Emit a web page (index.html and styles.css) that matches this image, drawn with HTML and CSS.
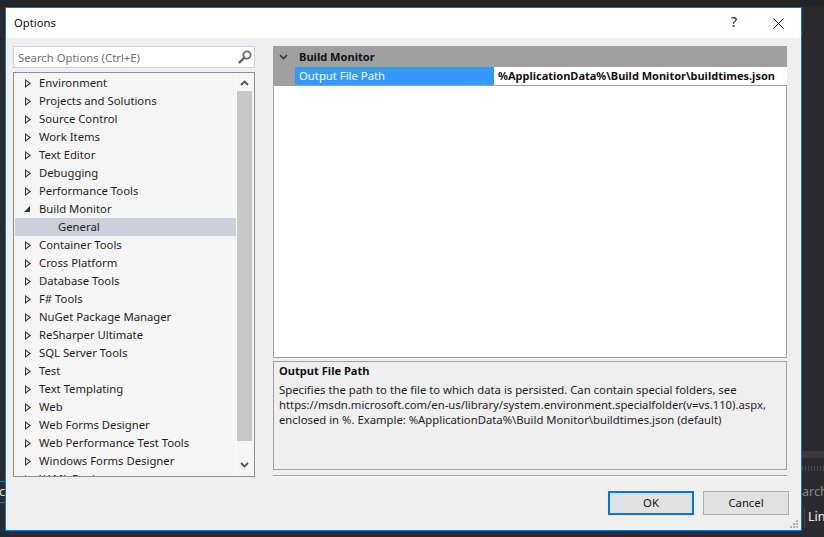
FILE: index.html
```html
<!DOCTYPE html>
<html lang="en">
<head>
<meta charset="utf-8">
<title>Options</title>
<link rel="stylesheet" href="styles.css">
</head>
<body>
<div class="desktop">
  <div class="bg-top"></div>
  <div class="bg-left-tab"><span>c</span></div>
  <div class="bg-band"></div>
  <div class="bg-dots"></div>
  <div class="bg-arch">arch</div>
  <div class="bg-lin">Lin</div>

  <div class="dialog">
    <header class="titlebar">
      <span class="title">Options</span>
      <div class="title-actions">
        <span class="help">?</span>
        <svg class="close" width="11" height="11" viewBox="0 0 11 11"><path d="M.5.5l10 10M10.5.5l-10 10" stroke="#111" stroke-width="1" fill="none"/></svg>
      </div>
    </header>
    <div class="content">
      <div class="left">
        <div class="search">
          <span class="search-text">Search Options (Ctrl+E)</span>
          <svg width="14" height="14" viewBox="0 0 14 14"><circle cx="9" cy="5" r="3.6" fill="none" stroke="#6b6b6b" stroke-width="1.8"/><path d="M6.2 7.8L1.6 12.4" stroke="#6b6b6b" stroke-width="2.6" stroke-linecap="round"/></svg>
        </div>
        <div class="tree">
          <ul class="tree-list">
            <li class="node"><i class="tri"></i>Environment</li>
            <li class="node"><i class="tri"></i>Projects and Solutions</li>
            <li class="node"><i class="tri"></i>Source Control</li>
            <li class="node"><i class="tri"></i>Work Items</li>
            <li class="node"><i class="tri"></i>Text Editor</li>
            <li class="node"><i class="tri"></i>Debugging</li>
            <li class="node"><i class="tri"></i>Performance Tools</li>
            <li class="node"><i class="tri-open"></i>Build Monitor</li>
            <li class="node child">General</li>
            <li class="node"><i class="tri"></i>Container Tools</li>
            <li class="node"><i class="tri"></i>Cross Platform</li>
            <li class="node"><i class="tri"></i>Database Tools</li>
            <li class="node"><i class="tri"></i>F# Tools</li>
            <li class="node"><i class="tri"></i>NuGet Package Manager</li>
            <li class="node"><i class="tri"></i>ReSharper Ultimate</li>
            <li class="node"><i class="tri"></i>SQL Server Tools</li>
            <li class="node"><i class="tri"></i>Test</li>
            <li class="node"><i class="tri"></i>Text Templating</li>
            <li class="node"><i class="tri"></i>Web</li>
            <li class="node"><i class="tri"></i>Web Forms Designer</li>
            <li class="node"><i class="tri"></i>Web Performance Test Tools</li>
            <li class="node"><i class="tri"></i>Windows Forms Designer</li>
            <li class="node"><i class="tri"></i>XAML Designer</li>
          </ul>
          <div class="scrollbar">
            <svg class="arrow" width="9" height="6" viewBox="0 0 9 6"><path d="M1 5l3.5-3.5L8 5" fill="none" stroke="#555" stroke-width="1.8"/></svg>
            <div class="thumb"></div>
            <svg class="arrow" width="9" height="6" viewBox="0 0 9 6"><path d="M1 1l3.5 3.5L8 1" fill="none" stroke="#555" stroke-width="1.8"/></svg>
          </div>
        </div>
      </div>
      <div class="right">
        <div class="grid">
          <div class="group">
            <svg width="9" height="6" viewBox="0 0 9 6"><path d="M1 1l3.5 3.5L8 1" fill="none" stroke="#333" stroke-width="1.6"/></svg>
            <span>Build Monitor</span>
          </div>
          <div class="prop">
            <div class="prop-gutter"></div>
            <div class="prop-name">Output File Path</div>
            <div class="prop-value">%ApplicationData%\Build Monitor\buildtimes.json</div>
          </div>
        </div>
        <div class="desc">
          <div class="desc-title">Output File Path</div>
          <p class="desc-text">Specifies the path to the file to which data is persisted. Can contain special folders, see<br>https://msdn.microsoft.com/en-us/library/system.environment.specialfolder(v=vs.110).aspx,<br>enclosed in %. Example: %ApplicationData%\Build Monitor\buildtimes.json (default)</p>
        </div>
        <div class="rule"></div>
      </div>
    </div>
    <footer class="footer">
      <button class="btn primary">OK</button>
      <button class="btn">Cancel</button>
    </footer>
    <svg class="grip" width="10" height="10" viewBox="0 0 10 10" fill="#b4b4b4"><rect x="7" y="1" width="2" height="2"/><rect x="4" y="4" width="2" height="2"/><rect x="7" y="4" width="2" height="2"/><rect x="1" y="7" width="2" height="2"/><rect x="4" y="7" width="2" height="2"/><rect x="7" y="7" width="2" height="2"/></svg>
  </div>
</div>
</body>
</html>
```
FILE: styles.css
```css
* { box-sizing: border-box; }
html, body { margin: 0; padding: 0; }
body { font-family: "Noto Sans", "Open Sans", sans-serif; font-size: 11.3px; color: #1e1e1e; }

.desktop { position: relative; width: 824px; height: 537px; overflow: hidden; background: #2a2a2c; }
.bg-top { position: absolute; left: 0; top: 0; width: 824px; height: 7px; background: #252526; }
.bg-left-tab { position: absolute; left: 0; top: 481px; width: 5px; height: 22px; border-top: 1px solid #007acc; border-bottom: 1px solid #007acc; color: #ddd; overflow: hidden; }
.bg-left-tab span { display: block; margin-left: -1px; font-size: 13px; line-height: 19px; }
.bg-band { position: absolute; left: 802px; top: 451px; width: 22px; height: 7px; background: #3a3a3d; }
.bg-dots { position: absolute; left: 802px; top: 466px; width: 22px; height: 5px; background: repeating-linear-gradient(90deg, #46464a 0 1px, transparent 1px 3px); }
.bg-arch { position: absolute; left: 802px; top: 483px; width: 22px; overflow: hidden; font-size: 12.5px; line-height: 18px; color: #8a8a8a; text-align: right; white-space: nowrap; }
.bg-lin { position: absolute; left: 804px; top: 508px; height: 20px; padding-left: 3px; font-size: 12.5px; line-height: 18px; color: #f0f0f0; border-left: 1px solid #45454a; }

.dialog { position: absolute; left: 5px; top: 7px; width: 797px; height: 524px; display: flex; flex-direction: column; background: #efefef; border: 1px solid #0078d7; }

.titlebar { height: 30px; flex: none; display: flex; align-items: center; justify-content: space-between; background: #fff; padding: 0 17px 2px 8px; }
.title { color: #111; }
.title-actions { display: flex; align-items: center; gap: 36px; }
.help { font-size: 14px; line-height: 16px; color: #222; }
.close { margin-top: 2px; }

.content { display: flex; gap: 18px; height: 439px; flex: none; padding: 8px 14px 0 7px; }
.left { width: 242px; display: flex; flex-direction: column; gap: 4px; }
.search { height: 22px; flex: none; display: flex; align-items: center; justify-content: space-between; padding: 0 2px 0 4px; background: #fff; border: 1px solid #cfcfe1; }
.search-text { color: #6f6f6f; }

.tree { height: 405px; flex: none; display: flex; background: #f5f5f5; border: 1px solid #8a8f97; overflow: hidden; }
.tree-list { list-style: none; margin: 0; padding: 1px 0 0 1px; width: 222px; flex: none; height: 403px; overflow: hidden; }
.node { position: relative; height: 18px; line-height: 18px; padding-left: 24px; color: #1e1e1e; white-space: nowrap; }
.child { padding-left: 43px; background: #ccced9; }
.tri { position: absolute; left: 10px; top: 5px; width: 6px; height: 9px; background: #333; clip-path: polygon(0 0, 100% 50%, 0 100%); }
.tri::after { content: ""; position: absolute; left: 1px; top: 2px; width: 3px; height: 5px; background: #f5f5f5; clip-path: polygon(0 0, 100% 50%, 0 100%); }
.tri-open { position: absolute; left: 9px; top: 6px; width: 0; height: 0; border-bottom: 6px solid #333; border-left: 6px solid transparent; }

.scrollbar { width: 18px; flex: none; display: flex; flex-direction: column; align-items: center; padding: 7px 2px 8px 0; border-left: 1px solid #fbfbfb; }
.arrow { flex: none; }
.thumb { width: 15px; height: 351px; margin: 5px 0 21px; background: #c8c8c8; }

.right { width: 514px; display: flex; flex-direction: column; }
.grid { height: 312px; flex: none; background: #fff; border: 1px solid #a0a0a0; border-top: 0; }
.group { height: 21px; margin: 0 -1px; display: flex; align-items: center; background: #a0a0a0; padding-left: 6px; font-weight: 700; font-size: 11.1px; color: #111; }
.group svg { margin-right: 11px; }
.prop { height: 19px; margin: 0 -1px; display: flex; background: #fff; border-bottom: 1px solid #a0a0a0; }
.prop-gutter { width: 22px; flex: none; background: #a0a0a0; }
.prop-name { width: 199px; flex: none; padding-left: 4px; line-height: 18px; background: #3399ff; color: #fff; }
.prop-value { flex: 1; margin-left: 1px; padding-left: 3px; line-height: 18px; font-weight: 700; font-size: 11px; color: #111; white-space: nowrap; overflow: hidden; }

.desc { height: 109px; flex: none; margin-top: 3px; padding: 1px 5px; background: #efefef; border: 1px solid #a0a0a0; }
.desc-title { font-weight: 700; font-size: 11.1px; line-height: 16px; color: #111; }
.desc-text { margin: 3px 0 0; line-height: 15px; color: #1e1e1e; white-space: nowrap; }
.rule { height: 2px; flex: none; margin-top: 5px; background: linear-gradient(#a0a0a0 0 1px, #fff 1px 2px); }

.footer { display: flex; justify-content: flex-end; gap: 9px; padding: 14px 12px 0 0; }
.btn { width: 86px; height: 24px; padding: 0 0 2px; font: inherit; color: #111; background: #e1e1e1; border: 1px solid #adadad; border-radius: 0; }
.primary { border: 2px solid #0078d7; }
.grip { position: absolute; right: 2px; bottom: 1px; }
```
